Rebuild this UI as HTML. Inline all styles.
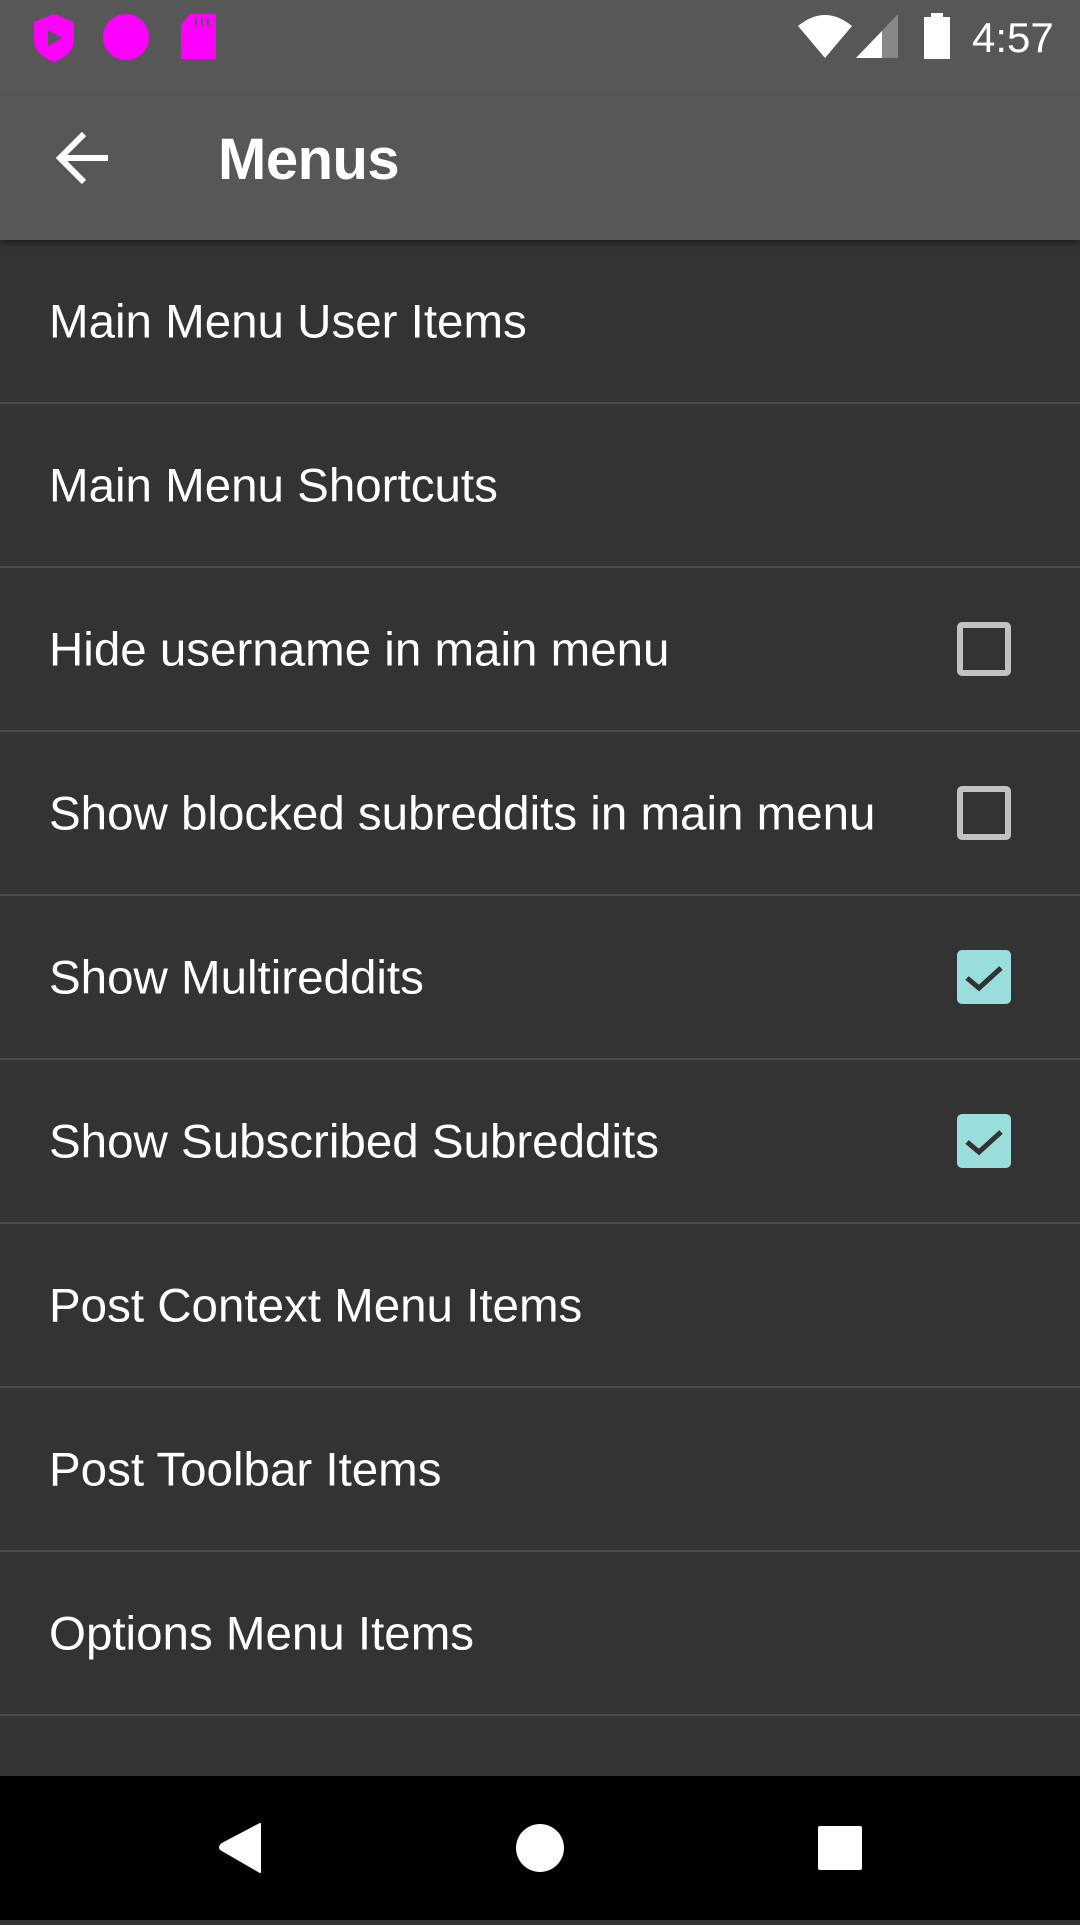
<!DOCTYPE html>
<html><head><meta charset="utf-8"><style>
*{margin:0;padding:0;box-sizing:border-box}
html,body{width:1080px;height:1920px;overflow:hidden;background:#333;font-family:"Liberation Sans",sans-serif;color:#fff}
.status{position:absolute;top:0;left:0;width:1080px;height:96px;background:#575757}
.appbar{position:absolute;top:96px;left:0;width:1080px;height:144px;background:#575757;box-shadow:0 3px 6px rgba(0,0,0,.4);z-index:2}
.title{position:absolute;left:218px;top:30px;font-size:58px;font-weight:bold;letter-spacing:-0.5px}
.list{position:absolute;top:240px;left:0;width:1080px}
.row{height:164px;border-bottom:2px solid #4a4a4a;position:relative}
.row span{position:absolute;left:49px;top:50%;transform:translateY(-48%);font-size:47.5px;white-space:nowrap}
.cb{position:absolute;left:957px;top:50%;margin-top:-27px;width:54px;height:54px;border:6px solid #c2c2c2;border-radius:5px}
.cb.on{background:#9adedc;border-color:#9adedc}
.nav{position:absolute;top:1776px;left:0;width:1080px;height:144px;background:#000}
.time{position:absolute;left:972px;top:14px;font-size:42px}
</style></head><body>
<div class="status">
<svg width="1080" height="96" style="position:absolute;left:0;top:0">
<path d="M54 14 L74 22 L74 40 Q74 54 54 62 Q34 54 34 40 L34 22 Z" fill="#f0f"/>
<path d="M48 30 L62 38 L48 46 Z" fill="#575757"/>
<ellipse cx="126" cy="37" rx="23" ry="23" fill="#f0f"/>
<path d="M190 14 L216 14 L216 59 L181 59 L181 25 Z" fill="#f0f"/>
<path d="M196 18v8M202 18v8M208 18v8" stroke="#575757" stroke-width="2"/>
<path d="M798 26 Q825 4 852 26 L825 58 Z" fill="#fff"/>
<path d="M856 58 L898 14 L898 58 Z" fill="#888"/>
<path d="M856 58 L882 31 L882 58 Z" fill="#fff"/>
<rect x="924" y="17" width="26" height="42" fill="#fff"/>
<rect x="931" y="13" width="12" height="5" fill="#fff"/>
</svg>
<div class="time">4:57</div>
</div>
<div class="appbar">
<svg width="80" height="80" style="position:absolute;left:44px;top:22px" viewBox="0 0 80 80">
<path d="M16 40 H64 M40 16 L16 40 L40 64" stroke="#fff" stroke-width="6" fill="none"/>
</svg>
<div class="title">Menus</div>
</div>
<div class="list">
<div class="row"><span>Main Menu User Items</span></div>
<div class="row"><span>Main Menu Shortcuts</span></div>
<div class="row"><span>Hide username in main menu</span><div class="cb"></div></div>
<div class="row"><span>Show blocked subreddits in main menu</span><div class="cb"></div></div>
<div class="row"><span>Show Multireddits</span><div class="cb on"><svg width="42" height="42" viewBox="0 0 42 42" style="position:absolute;left:0;top:0"><path d="M4 22 L16 32 L38 12" stroke="#333" stroke-width="5" fill="none"/></svg></div></div>
<div class="row"><span>Show Subscribed Subreddits</span><div class="cb on"><svg width="42" height="42" viewBox="0 0 42 42" style="position:absolute;left:0;top:0"><path d="M4 22 L16 32 L38 12" stroke="#333" stroke-width="5" fill="none"/></svg></div></div>
<div class="row"><span>Post Context Menu Items</span></div>
<div class="row"><span>Post Toolbar Items</span></div>
<div class="row"><span>Options Menu Items</span></div>
</div>
<div class="nav">
<svg width="1080" height="144">
<path d="M260 48 L260 96 L222 74 Q218 72 222 68 Z" fill="#fff" stroke="#fff" stroke-width="2" stroke-linejoin="round"/>
<circle cx="540" cy="72" r="24" fill="#fff"/>
<rect x="818" y="50" width="44" height="44" rx="2" fill="#fff"/>
</svg>
</div>
</body></html>
